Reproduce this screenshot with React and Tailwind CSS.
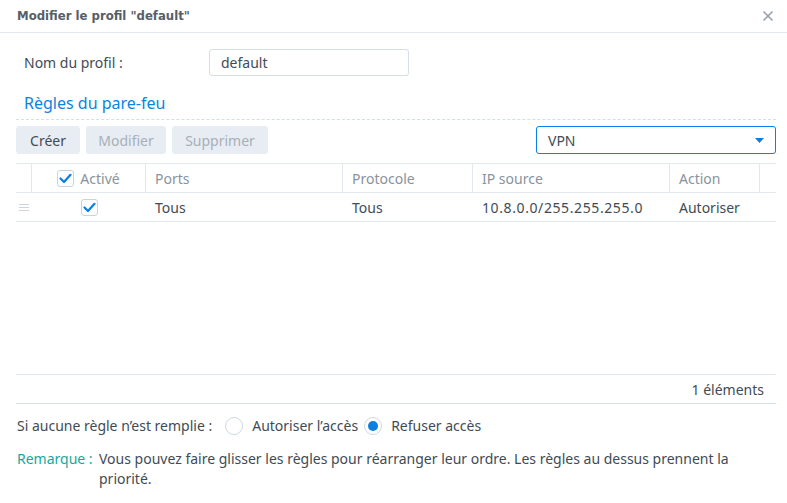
import { X } from 'lucide-react'

const font = { fontFamily: '"Noto Sans", "Open Sans", sans-serif' }

function Check() {
  return (
    <span className="flex h-[17px] w-[17px] items-center justify-center rounded-[3px] border border-[#c8d3e0] bg-white">
      <svg width="13" height="11" viewBox="0 0 13 11">
        <path d="M1.5 5.5 L5 9 L11.5 1.8" fill="none" stroke="#0a7fe0" strokeWidth="2.2" strokeLinecap="round" strokeLinejoin="round" />
      </svg>
    </span>
  )
}

function Radio({ checked }) {
  return (
    <span className="flex h-[18px] w-[18px] items-center justify-center rounded-full border border-[#cfd8e3] bg-white">
      {checked && <span className="h-[10px] w-[10px] rounded-full bg-[#0a7fe0]" />}
    </span>
  )
}

const cols = [
  { w: 'w-[114px]', label: 'Activé' },
  { w: 'w-[197px]', label: 'Ports', value: 'Tous' },
  { w: 'w-[130px]', label: 'Protocole', value: 'Tous' },
  { w: 'w-[197px]', label: 'IP source', value: '10.8.0.0/255.255.255.0', wide: true },
  { w: 'w-[90px]', label: 'Action', value: 'Autoriser' },
]

export default function App() {
  return (
    <div className="h-[503px] w-[787px] bg-white text-[14px] text-[#414b55]" style={font}>
      <div className="flex h-[33px] items-center justify-between border-b border-[#e3e8ef] pl-[17px] pr-[11px]">
        <span className="text-[13px] font-bold text-[#565e68]" style={{ fontFamily: '"DejaVu Sans Condensed", "DejaVu Sans", sans-serif' }}>
          Modifier le profil "default"
        </span>
        <X size={16} strokeWidth={2.6} className="text-[#9aa2ab]" />
      </div>

      <div className="pl-[16px] pr-[11px]">
        <div className="mt-[16px] flex items-center">
          <span className="w-[193px] pl-[8px]">Nom du profil :</span>
          <div className="flex h-[27px] w-[200px] items-center rounded-[3px] border border-[#d5dde8] px-[11px]">default</div>
        </div>

        <div className="mt-[15px] border-b border-dashed border-[#d5dde8] pb-[4px] pl-[8px] text-[16px] text-[#0a84e0]">
          Règles du pare-feu
        </div>

        <div className="mt-[6px] flex items-center">
          <button className="h-[28px] w-[64px] rounded-[3px] bg-[#e8edf4]">Créer</button>
          <button className="ml-[6px] h-[28px] w-[80px] rounded-[3px] bg-[#e8edf4] text-[#a7afb8]">Modifier</button>
          <button className="ml-[6px] h-[28px] w-[96px] rounded-[3px] bg-[#e8edf4] text-[#a7afb8]">Supprimer</button>
          <div className="ml-auto flex h-[28px] w-[240px] items-center justify-between rounded-[3px] border border-[#0b80e3] pl-[11px] pr-[11px]">
            <span>VPN</span>
            <svg width="9" height="5" viewBox="0 0 9 5"><path d="M0 0 H9 L4.5 5 Z" fill="#0a7fe0" /></svg>
          </div>
        </div>

        <div className="mt-[9px] flex h-[212px] flex-col border-b border-t border-[#e3e8ef]">
          <div className="flex h-[29px] border-b border-[#e3e8ef] text-[#8a939d]">
            <div className="w-[16px] border-r border-[#e3e8ef]" />
            {cols.map((c, i) => (
              <div key={c.label} className={`${c.w} flex items-center border-r border-[#e3e8ef] ${i === 0 ? 'justify-center gap-[6px]' : 'pl-[9px]'}`}>
                {i === 0 && <Check />}
                {c.label}
              </div>
            ))}
          </div>
          <div className="flex h-[29px] border-b border-[#e3e8ef]">
            <div className="flex w-[16px] items-center justify-center">
              <svg width="10" height="7" viewBox="0 0 10 7"><path d="M0 0.5H10M0 3.5H10M0 6.5H10" stroke="#cdd3db" strokeWidth="1" /></svg>
            </div>
            {cols.map((c, i) => (
              <div key={c.label} className={`${c.w} flex items-center ${i === 0 ? 'justify-center' : 'pl-[9px]'} ${c.wide ? 'tracking-[0.6px]' : ''}`}>
                {i === 0 ? <Check /> : c.value}
              </div>
            ))}
          </div>
        </div>

        <div className="flex h-[29px] items-center justify-end border-b border-[#d5e1ea] pr-[12px]">1 éléments</div>

        <div className="mt-[11px] flex items-center">
          <span className="mr-[13px] pl-[1px]">Si aucune règle n’est remplie :</span>
          <Radio />
          <span className="ml-[9px] mr-[6px]">Autoriser l’accès</span>
          <Radio checked />
          <span className="ml-[9px]">Refuser accès</span>
        </div>

        <div className="mt-[13px] flex pl-[1px] leading-[20px]">
          <span className="w-[82px] shrink-0 text-[#14a89c]">Remarque :</span>
          <span className="pr-[40px]">Vous pouvez faire glisser les règles pour réarranger leur ordre. Les règles au dessus prennent la priorité.</span>
        </div>
      </div>
    </div>
  )
}
